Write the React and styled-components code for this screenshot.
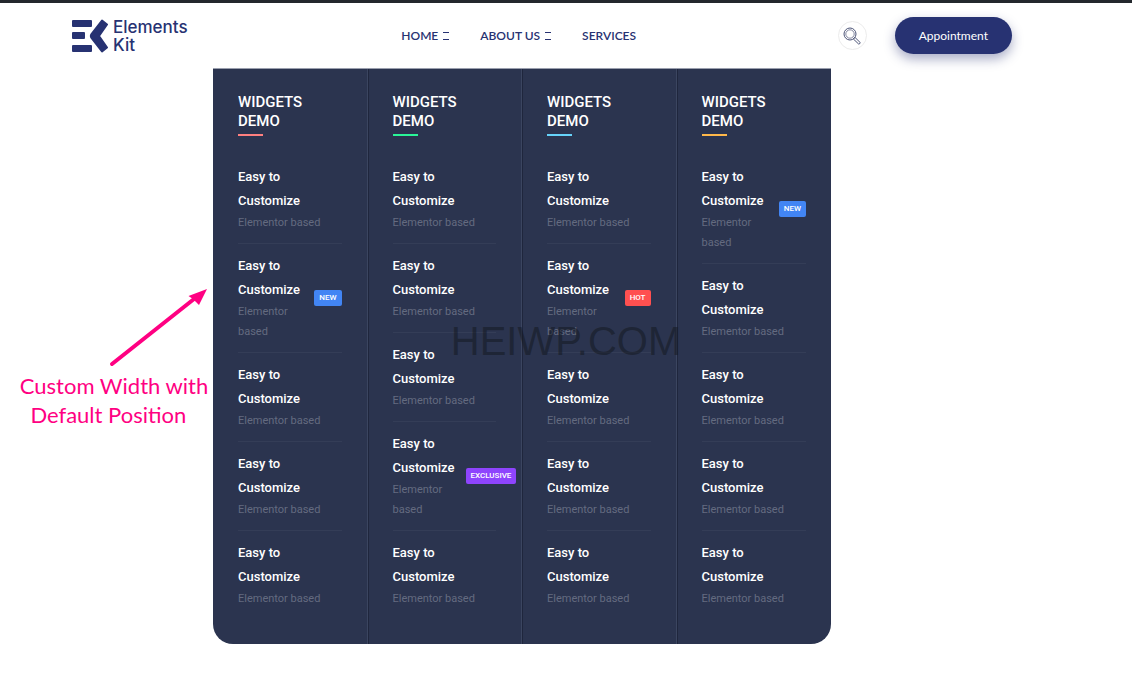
import React from "react";
import styled, { createGlobalStyle } from "styled-components";

const GlobalStyle = createGlobalStyle`
  * {
    box-sizing: border-box;
  }

  body {
    margin: 0;
    background: #fff;
    font-family: Roboto, "Liberation Sans", sans-serif;
  }
`;

const Page = styled.div`
  position: relative;
  min-height: 100vh;
`;

const Header = styled.header`
  display: flex;
  align-items: center;
  justify-content: space-between;
  height: 68px;
  padding: 0 120px 0 72px;
  border-top: 3px solid #23282d;
`;

const Logo = styled.a`
  display: flex;
  align-items: center;
  gap: 5px;
  color: #273272;
  font: 500 17px/18px Inter, sans-serif;
  text-decoration: none;
`;

const LogoText = styled.span`
  width: min-content;
`;

const Nav = styled.nav`
  display: flex;
  gap: 31px;
  padding-left: 12px;
`;

const NavLink = styled.a`
  display: flex;
  align-items: center;
  gap: 5px;
  color: #273272;
  font: 600 12px/20px Lato, sans-serif;
  text-transform: uppercase;
  text-decoration: none;
`;

const Caret = styled.span`
  width: 6px;
  height: 8px;
  border: solid #273272;
  border-width: 1px 0;
`;

const Actions = styled.div`
  display: flex;
  align-items: center;
  gap: 28px;
`;

const SearchButton = styled.button`
  display: flex;
  align-items: center;
  justify-content: center;
  width: 29px;
  height: 29px;
  padding: 0;
  border: 1px solid #ececec;
  border-radius: 50%;
  background: #fff;
  cursor: pointer;
`;

const AppointmentButton = styled.button`
  height: 37px;
  padding: 0 24px;
  border: 0;
  border-radius: 19px;
  background: #273272;
  box-shadow: 0 5px 12px rgba(39, 50, 114, 0.4);
  color: #fff;
  font: 400 12px/20px Lato, sans-serif;
  cursor: pointer;
`;

const Main = styled.main`
  display: flex;
  align-items: flex-start;
`;

const Note = styled.aside`
  flex: 0 0 213px;
  padding-top: 220px;
  color: #ff0082;
  font: 400 22px/29px Lato, sans-serif;
  text-align: center;
  white-space: pre;

  svg {
    display: block;
    margin-left: 108px;
  }

  p {
    margin: 3px 0 0 15px;
  }
`;

const MegaMenu = styled.div`
  display: grid;
  grid-template-columns: repeat(4, 1fr);
  flex: 0 1 618px;
  border-top: 1px solid #9a9fae;
  border-radius: 0 0 20px 20px;
  background: #2b344f;
`;

const Column = styled.section`
  min-width: 0;
  padding: 24px 25px 25px;

  & + & {
    border-left: 1px solid #1f263d;
    padding-left: 24px;
  }

  &:not(:last-child) {
    border-right: 1px solid #3b4560;
  }
`;

const Title = styled.h2`
  margin: 0 0 19px;
  color: #fff;
  font-size: 15px;
  font-weight: 500;
  line-height: 19px;
  text-transform: uppercase;

  &::after {
    content: "";
    display: block;
    width: 25px;
    height: 2px;
    margin-top: 3px;
    background: ${({ accent }) => accent};
  }
`;

const List = styled.ul`
  margin: 0;
  padding: 0;
  list-style: none;
`;

const Item = styled.li`
  padding: 10px 0;

  &:not(:last-child) {
    border-bottom: 1px solid #343d57;
  }
`;

const ItemLink = styled.a`
  display: flex;
  align-items: center;
  text-decoration: none;
`;

const ItemText = styled.span`
  flex: 1;
  color: #fff;
  font-size: 13px;
  font-weight: 500;
  line-height: 24px;
`;

const Subtitle = styled.small`
  display: block;
  color: #646b80;
  font-size: 11px;
  font-weight: 400;
  line-height: 20px;
`;

const Badge = styled.span`
  margin-left: 11px;
  padding: 0 5px;
  border-radius: 2px;
  background: ${({ color }) => color};
  color: #fff;
  font-size: 8px;
  font-weight: 500;
  line-height: 16px;
`;

const Watermark = styled.div`
  position: absolute;
  top: 50%;
  left: 50%;
  transform: translate(-50%, -50%);
  color: rgba(20, 24, 32, 0.55);
  font: 40px/46px "Liberation Sans", sans-serif;
  pointer-events: none;
`;

const NEW = { text: "NEW", color: "#4285f4" };
const HOT = { text: "HOT", color: "#ff5050" };
const EXCLUSIVE = { text: "EXCLUSIVE", color: "#8e44fd" };

const columns = [
  { accent: "#ff8080", badges: [null, NEW, null, null, null] },
  { accent: "#2af598", badges: [null, null, null, EXCLUSIVE, null] },
  { accent: "#66d3fa", badges: [null, HOT, null, null, null] },
  { accent: "#ffb84a", badges: [NEW, null, null, null, null] }
];

const LogoMark = () => (
  <svg width="36" height="34" viewBox="0 0 36 34" fill="#273272">
    <rect x="0" y="1" width="20" height="7" rx="1" />
    <rect x="0" y="13" width="13" height="7" rx="1" />
    <rect x="0" y="26" width="20" height="7" rx="1" />
    <path
      d="M30 1.5 L35 5.5 L27 17 L35 28.5 L30 32.5 L19.5 19 Q18.2 17 19.5 15 Z"
      stroke="#273272"
      strokeWidth="2"
      strokeLinejoin="round"
    />
  </svg>
);

const SearchIcon = () => (
  <svg width="18" height="18" viewBox="0 0 18 18" fill="none" stroke="#4d5578">
    <circle cx="7" cy="7" r="6" />
    <circle cx="7" cy="7" r="4.2" strokeWidth="0.7" />
    <path d="M10.4 12 L12 10.4 L17 15.4 Q17.4 17 15.6 17 Z" />
  </svg>
);

const Arrow = () => (
  <svg width="100" height="80" viewBox="0 0 100 80">
    <path
      d="M4 76 L86 11"
      fill="none"
      stroke="#ff0082"
      strokeWidth="4"
      strokeLinecap="round"
    />
    <path d="M99 1 L80.5 8 L85 11 L88 14 L91 17 Z" fill="#ff0082" />
  </svg>
);

const App = () => (
  <Page>
    <GlobalStyle />
    <Header>
      <Logo href="#">
        <LogoMark />
        <LogoText>Elements Kit</LogoText>
      </Logo>
      <Nav>
        <NavLink href="#">
          Home <Caret />
        </NavLink>
        <NavLink href="#">
          About us <Caret />
        </NavLink>
        <NavLink href="#">Services</NavLink>
      </Nav>
      <Actions>
        <SearchButton aria-label="Search">
          <SearchIcon />
        </SearchButton>
        <AppointmentButton>Appointment</AppointmentButton>
      </Actions>
    </Header>
    <Main>
      <Note>
        <Arrow />
        <p>{"Custom Width with\nDefault Position\u00a0\u00a0"}</p>
      </Note>
      <MegaMenu>
        {columns.map(({ accent, badges }) => (
          <Column key={accent}>
            <Title accent={accent}>Widgets Demo</Title>
            <List>
              {badges.map((badge, index) => (
                <Item key={index}>
                  <ItemLink href="#">
                    <ItemText>
                      Easy to Customize
                      <Subtitle>Elementor based</Subtitle>
                    </ItemText>
                    {badge && <Badge color={badge.color}>{badge.text}</Badge>}
                  </ItemLink>
                </Item>
              ))}
            </List>
          </Column>
        ))}
      </MegaMenu>
    </Main>
    <Watermark>HEIWP.COM</Watermark>
  </Page>
);

export default App;
